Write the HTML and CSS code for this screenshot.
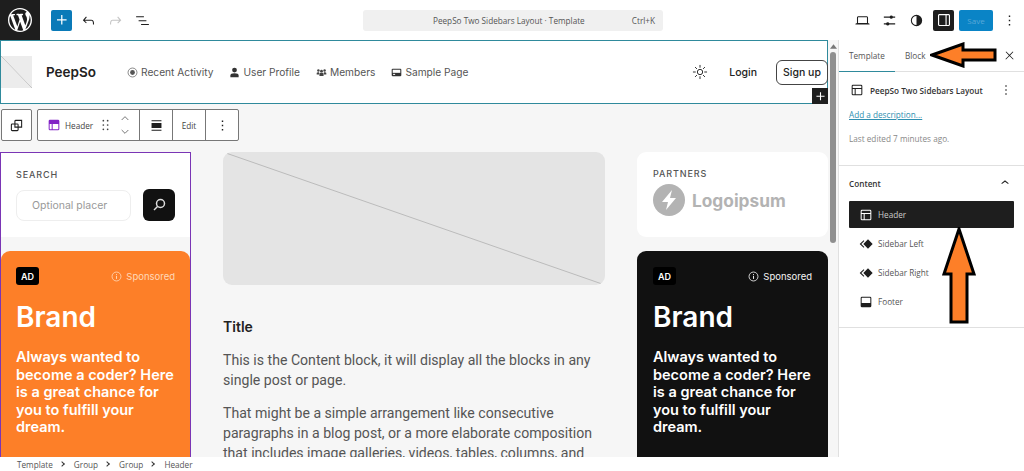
FILE: index.html
```html
<!DOCTYPE html>
<html lang="en">
<head>
  <meta charset="UTF-8">
  <title>PeepSo Two Sidebars Layout - Template</title>
  <link rel="stylesheet" href="styles.css">
</head>
<body>
  <div class="app">
    <header class="topbar">
      <div class="wp-logo">
        <svg width="24" height="24" viewBox="0 0 20 20"><path fill="#fff" d="M20 10c0-5.51-4.49-10-10-10C4.48 0 0 4.49 0 10c0 5.52 4.48 10 10 10 5.51 0 10-4.48 10-10zM7.78 15.37L4.37 6.22c.55-.02 1.17-.08 1.17-.08.5-.06.44-1.13-.06-1.11 0 0-1.45.11-2.37.11-.18 0-.37 0-.58-.01C4.12 2.69 6.87 1.11 10 1.11c2.33 0 4.45.87 6.05 2.34-.68-.11-1.65.39-1.65 1.58 0 .74.45 1.36.9 2.1.35.61.55 1.36.55 2.46 0 1.49-1.4 5-1.4 5l-3.03-8.37c.54-.02.82-.17.82-.17.5-.05.44-1.25-.06-1.22 0 0-1.44.12-2.38.12-.87 0-2.33-.12-2.33-.12-.5-.03-.56 1.2-.06 1.22l.92.08 1.26 3.41zM17.41 10c.24-.64.74-1.87.43-4.25.7 1.29 1.05 2.71 1.05 4.25 0 3.29-1.73 6.24-4.4 7.78.97-2.59 1.94-5.2 2.92-7.78zM6.1 18.09C3.12 16.65 1.11 13.53 1.11 10c0-1.3.23-2.48.72-3.59C3.25 10.3 4.67 14.2 6.1 18.09zm4.03-6.63l2.58 6.98c-.86.29-1.76.45-2.71.45-.79 0-1.57-.11-2.29-.33.81-2.38 1.62-4.74 2.42-7.1z"/></svg>
      </div>
      <div class="tools-left">
        <button class="btn-add">
          <svg width="20" height="20" viewBox="0 0 24 24"><path fill="#fff" d="M11 12.5V17.5H12.5V12.5H17.5V11H12.5V6H11V11H6V12.5H11Z"/></svg>
        </button>
        <svg class="tool-icon" viewBox="0 0 24 24"><path d="M18.3 11.7c-.6-.6-1.4-.9-2.3-.9H6.7l2.9-3.3-1.1-1-4.5 5L8.5 16l1-1-2.7-2.7H16c.5 0 .9.2 1.3.5 1 1 1 3.4 1 4.5v.3h1.5v-.2c0-1.5 0-4.3-1.5-5.7z"/></svg>
        <svg class="tool-icon muted" viewBox="0 0 24 24"><path d="M15.6 6.5l-1.1 1 2.9 3.3H8c-.9 0-1.7.3-2.3.9-1.4 1.5-1.4 4.2-1.4 5.6v.2h1.5v-.3c0-1.1 0-3.5 1-4.5.3-.3.7-.5 1.3-.5h9.2L14.5 15l1.1 1.1 4.6-4.6-4.6-5z"/></svg>
        <svg class="tool-icon" viewBox="0 0 24 24"><path d="M3 6h11v1.5H3V6zm3.5 5.5h11V13h-11v-1.5zM21 17H10v1.5h11V17z"/></svg>
      </div>
      <div class="command-bar">
        <span class="command-title">PeepSo Two Sidebars Layout · Template</span>
        <span class="command-key">Ctrl+K</span>
      </div>
      <div class="tools-right">
        <svg class="tool-icon" viewBox="0 0 24 24"><path d="M20.5 16h-.7V8c0-1.1-.9-2-2-2H6.2c-1.1 0-2 .9-2 2v8h-.7c-.8 0-1.5.7-1.5 1.5h20c0-.8-.7-1.500-1.500-1.500zM5.700 8c0-.3.2-.5.5-.5h11.600c.3 0 .5.2.5.5v7.600H5.700V8z"/></svg>
        <svg class="tool-icon" viewBox="0 0 24 24"><path d="M4 8h8.200a2.500 2.500 0 0 0 4.600 0H20V6.500h-3.200a2.500 2.500 0 0 0-4.600 0H4V8zm16 8h-8.200a2.500 2.500 0 0 0-4.600 0H4v1.500h3.200a2.500 2.500 0 0 0 4.600 0H20V16z"/></svg>
        <svg class="tool-icon" viewBox="0 0 24 24"><path d="M12 4a8 8 0 1 0 0 16 8 8 0 0 0 0-16zm0 14.500V5.500a6.500 6.500 0 0 1 0 13z" transform="matrix(-1 0 0 1 24 0)"/></svg>
        <div class="panel-toggle">
          <svg width="24" height="24" viewBox="0 0 24 24"><path fill="#fff" d="M18 4H6c-1.100 0-2 .9-2 2v12c0 1.100.9 2 2 2h12c1.100 0 2-.9 2-2V6c0-1.100-.9-2-2-2zM5.500 18V6c0-.3.2-.5.5-.5h8v13H6c-.3 0-.5-.2-.5-.5zm13 0c0 .3-.2.5-.5.5h-2.500v-13H18c.3 0 .5.2.5.5v12z"/></svg>
        </div>
        <button class="btn-save">Save</button>
        <svg class="tool-icon tool-more" viewBox="0 0 24 24"><path d="M13 19h-2v-2h2v2zm0-6h-2v-2h2v2zm0-6h-2V5h2v2z"/></svg>
      </div>
    </header>

    <main class="canvas">
      <div class="site-header">
        <div class="site-logo"></div>
        <div class="site-name">PeepSo</div>
        <nav class="site-nav">
          <a class="nav-link">
            <svg class="nav-icon" viewBox="0 0 16 16"><circle cx="8" cy="8" r="6.500" fill="none" stroke="#555" stroke-width="1"/><circle cx="8" cy="8" r="3.500" fill="#555"/></svg>
            Recent Activity</a>
          <a class="nav-link">
            <svg class="nav-icon" viewBox="0 0 16 16"><circle cx="8" cy="4.500" r="3.500" fill="#333"/><path fill="#333" d="M2 15v-2.500C2 10 4 9 8 9s6 1 6 3.500V15z"/></svg>
            User Profile</a>
          <a class="nav-link">
            <svg class="nav-icon" viewBox="0 0 16 16"><g fill="#444"><circle cx="3.500" cy="5" r="1.800"/><circle cx="12.500" cy="5" r="1.800"/><circle cx="8" cy="6" r="2"/><path d="M1 11V9c0-1 1-1.500 3.500-1.500V11zM15 11V9c0-1-1-1.500-3.500-1.500V11zM5 13v-3c0-1 1-1.500 3-1.500s3 .5 3 1.500v3z"/></g></svg>
            Members</a>
          <a class="nav-link">
            <svg class="nav-icon" viewBox="0 0 16 16"><rect x="1" y="2.500" width="14" height="11" rx="1.500" fill="#333"/><rect x="2.500" y="4" width="11" height="4.500" fill="#fff"/><rect x="3" y="10" width="3" height="1.500" fill="#fff"/></svg>
            Sample Page</a>
        </nav>
        <div class="site-actions">
          <svg class="sun" viewBox="0 0 24 24"><circle cx="12" cy="12" r="4" fill="none" stroke="#333" stroke-width="1.500"/><path stroke="#333" stroke-width="1.500" stroke-linecap="round" d="M12 2v3M12 19v3M2 12h3M19 12h3M5 5l2 2M17 17l2 2M5 19l2-2M17 7l2-2"/></svg>
          <span class="login">Login</span>
          <span class="signup">Sign up</span>
        </div>
      </div>

      <div class="columns">
        <aside class="col-left">
          <div class="search-card">
            <div class="small-label">SEARCH</div>
            <div class="search-row">
              <div class="search-input">Optional placer</div>
              <div class="search-btn">
                <svg width="16" height="16" viewBox="0 0 16 16"><circle cx="9.500" cy="6.500" r="4" fill="none" stroke="#ddd" stroke-width="1.500"/><path stroke="#ddd" stroke-width="1.500" d="M6.500 9.500L3 13"/></svg>
              </div>
            </div>
          </div>
          <div class="ad ad-orange">
            <div class="ad-top">
              <span class="ad-badge">AD</span>
              <span class="ad-sponsored">
                <svg class="info" viewBox="0 0 16 16"><circle cx="8" cy="8" r="6.500" fill="none" stroke="currentColor" stroke-width="1.200"/><path stroke="currentColor" stroke-width="1.400" d="M8 7v4.500M8 4.500v1.300"/></svg>
                Sponsored</span>
            </div>
            <div class="ad-title">Brand</div>
            <p class="ad-text">Always wanted to become a coder? Here is a great chance for you to fulfill your dream.</p>
          </div>
        </aside>

        <section class="col-center">
          <div class="featured">
            <svg class="featured-line" viewBox="0 0 382 133" preserveAspectRatio="none"><line x1="0" y1="0" x2="382" y2="133" stroke="#bbb" stroke-width="1"/></svg>
          </div>
          <h2 class="post-title">Title</h2>
          <p class="post-text">This is the Content block, it will display all the blocks in any single post or page.</p>
          <p class="post-text">That might be a simple arrangement like consecutive paragraphs in a blog post, or a more elaborate composition that includes image galleries, videos, tables, columns, and</p>
        </section>

        <aside class="col-right">
          <div class="partners-card">
            <div class="small-label">PARTNERS</div>
            <div class="logoipsum">
              <svg width="32" height="32" viewBox="0 0 32 32"><circle cx="16" cy="16" r="16" fill="#b3b3b3"/><path fill="#fff" d="M19 6L9 18h6l-2 8 10-12h-6z"/></svg>
              <span>Logoipsum</span>
            </div>
          </div>
          <div class="ad ad-black">
            <div class="ad-top">
              <span class="ad-badge">AD</span>
              <span class="ad-sponsored">
                <svg class="info" viewBox="0 0 16 16"><circle cx="8" cy="8" r="6.500" fill="none" stroke="currentColor" stroke-width="1.200"/><path stroke="currentColor" stroke-width="1.400" d="M8 7v4.500M8 4.500v1.300"/></svg>
                Sponsored</span>
            </div>
            <div class="ad-title">Brand</div>
            <p class="ad-text">Always wanted to become a coder? Here is a great chance for you to fulfill your dream.</p>
          </div>
        </aside>
      </div>

      <!-- overlays on the canvas -->
      <div class="block-toolbar">
        <div class="tb-group tb-single">
          <svg class="tb-icon" viewBox="0 0 24 24"><path d="M20 4h-9a2 2 0 0 0-2 2v3H6a2 2 0 0 0-2 2v7a2 2 0 0 0 2 2h7a2 2 0 0 0 2-2v-3h5V4zm-6.500 14a.5.5 0 0 1-.5.500H6a.5.5 0 0 1-.5-.5v-7a.5.5 0 0 1 .5-.5h3V15h4.500v3zm0-4.500h-3V11a.5.5 0 0 1 .5-.5h2.500v3zm5 0H15V11a2 2 0 0 0-2-2h-2.500V6a.5.5 0 0 1 .5-.5h7.500v8z"/></svg>
        </div>
        <div class="tb-group">
          <div class="tb-cell tb-header">
            <svg class="tb-icon purple" viewBox="0 0 24 24"><path d="M6 4h12a2 2 0 0 1 2 2v12a2 2 0 0 1-2 2H6a2 2 0 0 1-2-2V6a2 2 0 0 1 2-2zm-.5 6.500V18a.5.5 0 0 0 .5.500h2.500v-8zm4.500 0v8h8a.5.5 0 0 0 .5-.5v-7.500z"/></svg>
            <span>Header</span>
            <svg class="tb-drag" viewBox="0 0 8 14"><g fill="#444"><circle cx="1.500" cy="2" r="1"/><circle cx="6.500" cy="2" r="1"/><circle cx="1.500" cy="7" r="1"/><circle cx="6.500" cy="7" r="1"/><circle cx="1.500" cy="12" r="1"/><circle cx="6.500" cy="12" r="1"/></g></svg>
            <svg class="tb-move" viewBox="0 0 12 26"><path fill="none" stroke="#777" stroke-width="1.200" d="M2 7l4-4 4 4M2 19l4 4 4-4"/></svg>
          </div>
          <div class="tb-cell tb-square">
            <svg class="tb-icon" viewBox="0 0 24 24"><path d="M5 4.500h14V6H5zM5 18h14v1.500H5zM5 8.500h14v7H5z"/></svg>
          </div>
          <div class="tb-cell tb-square tb-edit">Edit</div>
          <div class="tb-cell tb-square">
            <svg class="tb-icon" viewBox="0 0 24 24"><path d="M13 19h-2v-2h2v2zm0-6h-2v-2h2v2zm0-6h-2V5h2v2z"/></svg>
          </div>
        </div>
      </div>
      <div class="inserter">
        <svg width="13" height="13" viewBox="0 0 24 24"><path fill="#fff" d="M11 12.500V19h2v-6.500h6.500v-2H13V4h-2v6.500H4.500v2z"/></svg>
      </div>
      <div class="scrollbar">
        <svg class="scroll-up" viewBox="0 0 8 5"><path fill="#777" d="M4 0l4 5H0z"/></svg>
        <div class="scroll-thumb"></div>
      </div>
    </main>

    <aside class="inspector">
      <div class="tabs">
        <span class="tab tab-active">Template</span>
        <span class="tab">Block</span>
        <svg class="tab-close" viewBox="0 0 24 24"><path d="M13 11.800l6.100-6.300-1-1-6.100 6.200-6.100-6.200-1 1 6.100 6.300-6.500 6.700 1 1 6.500-6.600 6.500 6.600 1-1z"/></svg>
      </div>
      <div class="panel-summary">
        <div class="summary-head">
          <svg class="list-icon" viewBox="0 0 24 24"><path d="M18 5.500H6a.5.5 0 0 0-.5.5v3h13V6a.5.5 0 0 0-.5-.5zm.5 5H10v8h8a.5.5 0 0 0 .5-.5v-7.500zm-10 0h-3V18a.5.5 0 0 0 .5.500h2.500v-8zM6 4h12a2 2 0 0 1 2 2v12a2 2 0 0 1-2 2H6a2 2 0 0 1-2-2V6a2 2 0 0 1 2-2z"/></svg>
          <span class="summary-title">PeepSo Two Sidebars Layout</span>
          <svg class="summary-more" viewBox="0 0 24 24"><path d="M13 19h-2v-2h2v2zm0-6h-2v-2h2v2zm0-6h-2V5h2v2z"/></svg>
        </div>
        <a class="summary-link">Add a description...</a>
        <div class="summary-note">Last edited 7 minutes ago.</div>
      </div>
      <div class="panel-content">
        <div class="content-head">
          <span>Content</span>
          <svg class="chevron" viewBox="0 0 24 24"><path d="M6.500 12.400L12 8l5.500 4.400-.9 1.200L12 10l-4.600 3.600z"/></svg>
        </div>
        <ul class="part-list">
          <li class="part part-active">
            <svg class="list-icon" viewBox="0 0 24 24"><path d="M18 5.500H6a.5.5 0 0 0-.5.5v3h13V6a.5.5 0 0 0-.5-.5zm.5 5H10v8h8a.5.5 0 0 0 .5-.5v-7.500zm-10 0h-3V18a.5.5 0 0 0 .5.500h2.500v-8zM6 4h12a2 2 0 0 1 2 2v12a2 2 0 0 1-2 2H6a2 2 0 0 1-2-2V6a2 2 0 0 1 2-2z"/></svg>
            Header</li>
          <li class="part">
            <svg class="list-icon" viewBox="0 0 24 24"><path d="M15 5l7 7-7 7-7-7zM8.500 6.500l1 1L5 12l4.500 4.500-1 1L2.500 12z"/></svg>
            Sidebar Left</li>
          <li class="part">
            <svg class="list-icon" viewBox="0 0 24 24"><path d="M15 5l7 7-7 7-7-7zM8.500 6.500l1 1L5 12l4.500 4.500-1 1L2.500 12z"/></svg>
            Sidebar Right</li>
          <li class="part">
            <svg class="list-icon" viewBox="0 0 24 24"><path d="M18 4H6a2 2 0 0 0-2 2v12a2 2 0 0 0 2 2h12a2 2 0 0 0 2-2V6a2 2 0 0 0-2-2zm.5 2v7.500h-13V6a.5.5 0 0 1 .5-.5h12a.5.5 0 0 1 .5.5z"/></svg>
            Footer</li>
        </ul>
      </div>
    </aside>

    <footer class="breadcrumbs">
      <span>Template</span><i class="crumb-sep"></i>
      <span>Group</span><i class="crumb-sep"></i>
      <span>Group</span><i class="crumb-sep"></i>
      <span>Header</span>
    </footer>
  </div>

  <!-- annotation arrows drawn on top of the screenshot -->
  <svg class="arrow arrow-left" viewBox="0 0 67 26"><path fill="#fd7f28" stroke="#000" stroke-width="3" d="M2 13L33 2v6h32v10H33v6z"/></svg>
  <svg class="arrow arrow-up" viewBox="0 0 34 97"><path fill="#fd7f28" stroke="#000" stroke-width="3" d="M17 2L32 47H25V95H9V47H2z"/></svg>
</body>
</html>
```

FILE: styles.css
```css
* {
  box-sizing: border-box;
}

html, body {
  margin: 0;
  height: 100%;
  overflow: hidden;
}

body {
  background: #fff;
  color: #1e1e1e;
  font-family: "Open Sans", "Noto Sans", sans-serif;
  position: relative;
}

.app {
  display: grid;
  grid-template-columns: 838px 186px;
  grid-template-rows: 40px 417px 14px;
  height: 471px;
}

/* top bar */
.topbar {
  grid-column: 1 / 3;
  display: flex;
  align-items: center;
  background: #fff;
}

.wp-logo {
  width: 40px;
  height: 40px;
  background: #1e1e1e;
  display: flex;
  align-items: center;
  justify-content: center;
}

.tools-left {
  display: flex;
  align-items: center;
  width: 323px;
  padding-left: 11px;
  gap: 10px;
}

.btn-add {
  width: 21px;
  height: 21px;
  padding: 0;
  margin-right: -2px;
  border: none;
  border-radius: 2px;
  background: #0a7ab8;
  display: flex;
  align-items: center;
  justify-content: center;
}

.tool-icon {
  width: 17px;
  height: 17px;
  fill: #1e1e1e;
  flex: none;
}

.tool-icon.muted {
  fill: #c4c4c4;
}

.command-bar {
  width: 300px;
  height: 21px;
  padding: 0 8px 0 70px;
  background: #f0f0f0;
  border-radius: 3px;
  display: flex;
  align-items: center;
  justify-content: space-between;
  font-size: 8.200px;
  color: #555;
}

.tools-right {
  display: flex;
  align-items: center;
  margin-left: auto;
  padding-right: 6px;
  gap: 10px;
}

.panel-toggle {
  width: 21px;
  height: 21px;
  margin-left: -2px;
  border-radius: 2px;
  background: #1e1e1e;
  display: flex;
  align-items: center;
  justify-content: center;
}

.panel-toggle svg {
  width: 18px;
  height: 18px;
}

.btn-save {
  width: 34px;
  height: 21px;
  margin-left: -5px;
  padding: 0;
  border: none;
  border-radius: 2px;
  background: #0a84c6;
  color: #58a8d8;
  font-family: inherit;
  font-size: 8px;
}

.tool-more {
  margin-left: -2px;
}

/* editor canvas */
.canvas {
  position: relative;
  overflow: hidden;
  background: #f6f6f6;
}

.site-header {
  width: 828px;
  height: 64px;
  display: flex;
  align-items: center;
  background: #fff;
  border: 1px solid #2f8a9c;
  font-family: Inter, sans-serif;
}

.site-logo {
  width: 31px;
  height: 32px;
  background: linear-gradient(to top right, #ececec calc(50% - 0.6px), #c4c4c4 50%, #ececec calc(50% + 0.6px));
}

.site-name {
  margin-left: 14px;
  width: 81px;
  font-size: 13.500px;
  font-weight: 600;
  color: #222;
}

.site-nav {
  display: flex;
  align-items: center;
  gap: 16px;
}

.nav-link {
  display: flex;
  align-items: center;
  gap: 3px;
  font-size: 10.200px;
  color: #555;
}

.nav-icon {
  width: 11px;
  height: 11px;
}

.site-actions {
  display: flex;
  align-items: center;
  margin-left: auto;
  margin-right: -1px;
  font-size: 10.500px;
  color: #222;
}

.sun {
  width: 16px;
  height: 16px;
}

.login {
  margin-left: 21px;
  font-weight: 500;
}

.signup {
  margin-left: 19px;
  width: 52px;
  height: 25px;
  border: 1px solid #444;
  border-radius: 6px;
  display: flex;
  align-items: center;
  justify-content: center;
  font-weight: 500;
}

.columns {
  display: grid;
  grid-template-columns: 191px 382px 191px;
  column-gap: 32px;
  padding-top: 48px;
  font-family: Inter, sans-serif;
}

.col-left {
  height: 400px;
  border: 1px solid #7a35b5;
  border-bottom: none;
}

.search-card {
  background: #fff;
  height: 84px;
  padding: 16px 15px 0;
}

.small-label {
  font-size: 9px;
  font-weight: 500;
  letter-spacing: 0.9px;
  color: #555;
  line-height: 12px;
}

.search-row {
  display: flex;
  align-items: center;
  justify-content: space-between;
  margin-top: 8px;
}

.search-input {
  width: 115px;
  height: 31px;
  border: 1px solid #eee;
  border-radius: 8px;
  padding-left: 15px;
  font-size: 10.500px;
  line-height: 29px;
  color: #999;
  overflow: hidden;
  white-space: nowrap;
}

.search-btn {
  width: 32px;
  height: 32px;
  border-radius: 6px;
  background: #111;
  display: flex;
  align-items: center;
  justify-content: center;
}

.ad {
  height: 300px;
  padding: 16px 15px;
  border-radius: 9px 9px 0 0;
  color: #fff;
}

.ad-orange {
  margin-top: 14px;
  background: #fd7f28;
}

.ad-black {
  margin-top: 14px;
  padding: 16px;
  background: #111;
}

.ad-top {
  display: flex;
  align-items: center;
  justify-content: space-between;
}

.ad-badge {
  width: 23px;
  height: 18px;
  border-radius: 3px;
  background: #000;
  font-size: 9px;
  font-weight: 600;
  color: #fff;
  display: flex;
  align-items: center;
  justify-content: center;
}

.ad-sponsored {
  display: flex;
  align-items: center;
  gap: 4px;
  font-size: 9.500px;
  color: #f5f5f5;
}

.ad-orange .ad-sponsored {
  color: #ffd9b8;
}

.info {
  width: 11px;
  height: 11px;
}

.ad-title {
  margin-top: 14px;
  font-size: 28px;
  font-weight: 600;
  line-height: 36px;
}

.ad-text {
  margin: 13px 0 0;
  font-size: 14.500px;
  font-weight: 600;
  line-height: 17.500px;
}

.featured {
  height: 133px;
  background: #e4e4e4;
  border-radius: 9px;
  overflow: hidden;
}

.featured-line {
  display: block;
  width: 100%;
  height: 100%;
}

.post-title {
  margin: 32px 0 0;
  font-size: 14px;
  font-weight: 600;
  line-height: 20px;
  color: #222;
}

.post-text {
  margin: 13px 0 0;
  font-family: Roboto, sans-serif;
  font-size: 14.100px;
  line-height: 20px;
  color: #555;
}

.partners-card {
  height: 85px;
  padding: 16px;
  background: #fff;
  border-radius: 9px;
}

.logoipsum {
  display: flex;
  align-items: center;
  gap: 7px;
  margin-top: 4px;
  font-size: 17.300px;
  font-weight: 700;
  color: #b3b3b3;
}

/* block toolbar and other overlays */
.block-toolbar {
  position: absolute;
  left: 1px;
  top: 69px;
  display: flex;
  gap: 5px;
}

.tb-group {
  display: flex;
  height: 32px;
  background: #fff;
  border: 1px solid #777;
  border-radius: 2px;
}

.tb-single {
  width: 31px;
  align-items: center;
  justify-content: center;
}

.tb-cell {
  display: flex;
  align-items: center;
  justify-content: center;
  border-left: 1px solid #777;
  font-size: 8.200px;
  color: #444;
}

.tb-cell:first-child {
  border-left: none;
}

.tb-header {
  width: 101px;
  justify-content: flex-start;
  padding-left: 8px;
}

.tb-header span {
  margin-left: 3px;
}

.tb-square {
  width: 33px;
}

.tb-icon {
  width: 17px;
  height: 17px;
  fill: #1e1e1e;
}

.tb-icon.purple {
  width: 16px;
  height: 16px;
  fill: #8224c6;
}

.tb-drag {
  width: 7px;
  height: 12px;
  margin-left: 9px;
}

.tb-move {
  width: 10px;
  height: 22px;
  margin-left: 11px;
}

.inserter {
  position: absolute;
  left: 812px;
  top: 48px;
  width: 16px;
  height: 16px;
  background: #1e1e1e;
  display: flex;
  align-items: center;
  justify-content: center;
}

.scrollbar {
  position: absolute;
  left: 828px;
  top: 0;
  width: 10px;
  height: 100%;
  background: #f6f6f6;
  display: flex;
  flex-direction: column;
  align-items: center;
}

.scroll-up {
  width: 7px;
  height: 5px;
  margin-top: 4px;
}

.scroll-thumb {
  width: 6px;
  height: 191px;
  margin-top: 3px;
  border-radius: 3px;
  background: #8f8f8f;
}

/* right sidebar */
.inspector {
  background: #fff;
  border-left: 1px solid #e0e0e0;
  font-size: 8.200px;
  color: #555;
}

.tabs {
  height: 32px;
  display: flex;
  align-items: center;
  position: relative;
  border-bottom: 1px solid #e0e0e0;
}

.tab {
  height: 32px;
  padding: 0 10px;
  line-height: 31px;
}

.tab-active {
  width: 56px;
  border-bottom: 1px solid #2f8a9c;
}

.tab-close {
  position: absolute;
  right: 8px;
  top: 9px;
  width: 13px;
  height: 13px;
  fill: #1e1e1e;
}

.panel-summary {
  height: 94px;
  padding: 10px 10px 0;
  border-bottom: 1px solid #e0e0e0;
}

.summary-head {
  display: flex;
  align-items: center;
  height: 16px;
}

.summary-title {
  margin-left: 5px;
  font-weight: 600;
  color: #333;
}

.summary-more {
  width: 16px;
  height: 16px;
  margin-left: auto;
  fill: #333;
}

.summary-link {
  display: block;
  margin-top: 11px;
  color: #2f8fb0;
  text-decoration: underline;
}

.summary-note {
  margin-top: 13px;
  color: #888;
}

.panel-content {
  height: 162px;
  padding: 0 10px;
  border-bottom: 1px solid #e0e0e0;
}

.content-head {
  display: flex;
  align-items: center;
  justify-content: space-between;
  height: 35px;
  padding-bottom: 1px;
  font-weight: 600;
  color: #333;
}

.chevron {
  width: 16px;
  height: 16px;
  margin-right: 1px;
  fill: #1e1e1e;
}

.list-icon {
  width: 16px;
  height: 16px;
  flex: none;
  fill: #1e1e1e;
}

.part-list {
  list-style: none;
  margin: 0;
  padding: 0;
}

.part {
  display: flex;
  align-items: center;
  gap: 4px;
  height: 29px;
  padding-left: 9px;
  color: #555;
}

.part-active {
  height: 27px;
  margin-bottom: 1px;
  border-radius: 1px;
  background: #1e1e1e;
  color: #ccc;
}

.part-active .list-icon {
  fill: #fff;
}

/* breadcrumbs */
.breadcrumbs {
  grid-column: 1 / 3;
  display: flex;
  align-items: center;
  padding-left: 17px;
  background: #fff;
  font-size: 8.200px;
  color: #555;
}

.crumb-sep {
  width: 4px;
  height: 4px;
  margin: 0 10px 0 7px;
  border-top: 1.500px solid #333;
  border-right: 1.500px solid #333;
  transform: rotate(45deg);
}

/* annotation arrows */
.arrow {
  position: absolute;
}

.arrow-left {
  left: 930px;
  top: 42px;
  width: 67px;
  height: 26px;
}

.arrow-up {
  left: 942px;
  top: 227px;
  width: 34px;
  height: 97px;
}
```
